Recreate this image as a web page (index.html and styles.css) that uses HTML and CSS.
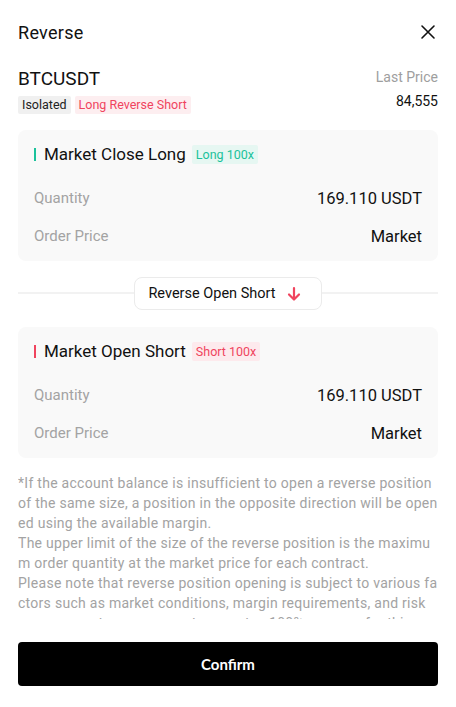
FILE: index.html
```html
<!DOCTYPE html>
<html lang="en">
<head>
    <meta charset="UTF-8" />
    <meta name="viewport" content="width=device-width, initial-scale=1.0" />
    <title>Reverse</title>
    <link rel="stylesheet" href="styles.css">
</head>
<body>
<div class="sheet">
    <header class="sheet-head">
        <h2>Reverse</h2>
        <button class="close" aria-label="Close">
            <svg width="16" height="16" viewBox="0 0 16 16"><path d="M2 2 L14 14 M14 2 L2 14" stroke="#111" stroke-width="1.6" stroke-linecap="round" fill="none"/></svg>
        </button>
    </header>

    <div class="symbol-row">
        <div>
            <div class="symbol">BTCUSDT</div>
            <div class="tags">
                <span class="tag gray">Isolated</span>
                <span class="tag red">Long Reverse Short</span>
            </div>
        </div>
        <div class="last-price">
            <div class="lp-label">Last Price</div>
            <div class="lp-value">84,555</div>
        </div>
    </div>

    <div class="order-card long">
        <div class="card-title">
            <span class="bar"></span>
            <span class="title-text">Market Close Long</span>
            <span class="badge">Long 100x</span>
        </div>
        <div class="row first">
            <span class="label">Quantity</span>
            <span class="value">169.110 USDT</span>
        </div>
        <div class="row">
            <span class="label">Order Price</span>
            <span class="value">Market</span>
        </div>
    </div>

    <div class="switch">
        <span class="switch-btn">
            Reverse Open Short
            <svg width="16" height="16" viewBox="0 0 16 16"><path d="M8 2 V13 M3 8.5 L8 13.5 L13 8.5" stroke="#f0445e" stroke-width="2.2" stroke-linecap="round" stroke-linejoin="round" fill="none"/></svg>
        </span>
    </div>

    <div class="order-card short">
        <div class="card-title">
            <span class="bar"></span>
            <span class="title-text">Market Open Short</span>
            <span class="badge">Short 100x</span>
        </div>
        <div class="row first">
            <span class="label">Quantity</span>
            <span class="value">169.110 USDT</span>
        </div>
        <div class="row">
            <span class="label">Order Price</span>
            <span class="value">Market</span>
        </div>
    </div>

    <div class="note">
        <p>*If the account balance is insufficient to open a reverse position of the same size, a position in the opposite direction will be opened using the available margin.</p>
        <p>The upper limit of the size of the reverse position is the maximum order quantity at the market price for each contract.</p>
        <p>Please note that reverse position opening is subject to various factors such as market conditions, margin requirements, and risk management, so we cannot guarantee 100% success for this operation.</p>
    </div>

    <button class="confirm">Confirm</button>
</div>
</body>
</html>
```

FILE: styles.css
```css
* {
    box-sizing: border-box;
}
body {
    margin: 0;
    font-family: Roboto, "Noto Sans", sans-serif;
    background-color: #fff;
    color: #111;
}
.sheet {
    padding: 0 18px;
    display: flex;
    flex-direction: column;
    height: 707px;
}
.sheet-head {
    height: 64px;
    display: flex;
    align-items: center;
    justify-content: space-between;
}
.sheet-head h2 {
    margin: 0;
    font-size: 18px;
    font-weight: 400;
    letter-spacing: 0.3px;
}
.close {
    background: none;
    border: none;
    padding: 0;
    margin-right: 2px;
    display: flex;
    cursor: pointer;
}
.symbol-row {
    display: flex;
    justify-content: space-between;
    align-items: flex-start;
    height: 66px;
    padding-top: 3px;
}
.symbol {
    font-size: 19px;
    line-height: 24px;
}
.tags {
    display: flex;
    gap: 4px;
    margin-top: 5px;
}
.tag {
    font-size: 12.5px;
    line-height: 18px;
    padding: 0 4px;
    border-radius: 2px;
}
.tag.gray {
    background-color: #f0f0f0;
    color: #222;
}
.tag.red {
    background-color: #fdeef0;
    color: #f0445e;
}
.last-price {
    text-align: right;
}
.lp-label {
    font-size: 14px;
    color: #9e9e9e;
    line-height: 20px;
}
.lp-value {
    font-size: 14px;
    line-height: 20px;
    margin-top: 4px;
}
.order-card {
    background-color: #f9f9f9;
    border-radius: 8px;
    padding: 14px 16px 13px;
}
.card-title {
    display: flex;
    align-items: center;
    height: 20px;
}
.bar {
    width: 2px;
    height: 13px;
    margin-right: 8px;
}
.title-text {
    font-size: 17px;
}
.badge {
    font-size: 12.5px;
    line-height: 19px;
    padding: 0 4px;
    border-radius: 2px;
    margin-left: 6px;
}
.long .bar {
    background-color: #1bc29b;
}
.long .badge {
    background-color: #e6f7f2;
    color: #1bc29b;
}
.short .bar {
    background-color: #f0445e;
}
.short .badge {
    background-color: #fdeaed;
    color: #f0445e;
}
.row {
    display: flex;
    justify-content: space-between;
    align-items: center;
    height: 24px;
    margin-top: 14px;
}
.row.first {
    margin-top: 22px;
}
.label {
    font-size: 15px;
    color: #a3a3a3;
}
.value {
    font-size: 16.5px;
}
.switch {
    position: relative;
    display: flex;
    justify-content: center;
    margin: 16px 0 17px;
}
.switch::before {
    content: "";
    position: absolute;
    left: 0;
    right: 0;
    top: 15px;
    border-top: 2px solid #f2f2f2;
}
.switch-btn {
    position: relative;
    display: flex;
    align-items: center;
    gap: 10px;
    height: 33px;
    padding: 0 19px 0 13px;
    background-color: #fff;
    border: 1px solid #ebebeb;
    border-radius: 8px;
    font-size: 14.5px;
}
.note {
    margin-top: 15px;
    height: 146px;
    overflow: hidden;
    font-size: 14px;
    line-height: 20px;
    letter-spacing: 0.28px;
    color: #a3a3a3;
    word-break: break-all;
}
.note p {
    margin: 0;
}
.confirm {
    margin-top: 23px;
    height: 44px;
    background-color: #000;
    color: #fff;
    border: none;
    border-radius: 4px;
    font-family: Lato, sans-serif;
    font-weight: 700;
    font-size: 15px;
    cursor: pointer;
}
```
